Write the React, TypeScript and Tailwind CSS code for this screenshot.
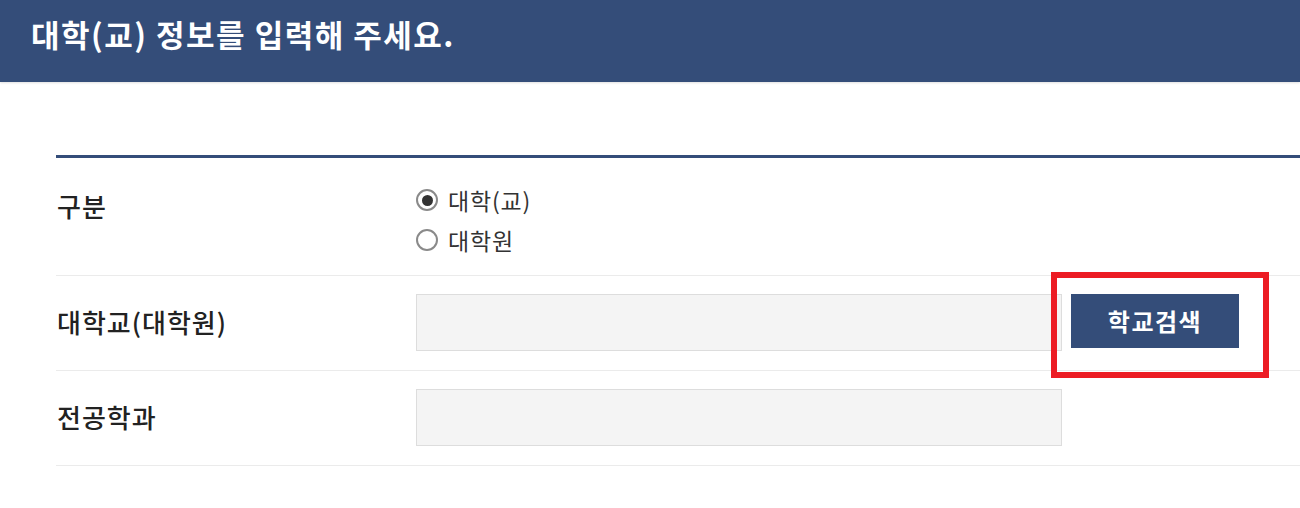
import { useState } from "react";

const font = { fontFamily: '"Noto Sans CJK KR", "Noto Sans", sans-serif' };

function Radio({ checked, label, onClick }: { checked: boolean; label: string; onClick: () => void }) {
  return (
    <label className="flex items-center gap-[10px] cursor-pointer h-[40px]" onClick={onClick}>
      <span className="w-[22px] h-[22px] rounded-full border-2 border-[#8a8a8a] bg-white flex items-center justify-center">
        {checked && <span className="w-[11px] h-[11px] rounded-full bg-[#333]"></span>}
      </span>
      <span className="text-[23px] text-[#333] leading-none tracking-[0.8px]">{label}</span>
    </label>
  );
}

export default function App() {
  const [type, setType] = useState("univ");

  return (
    <div className="min-h-screen bg-white overflow-hidden" style={font}>
      {/* Header */}
      <div className="bg-[#344d79] h-[82px] pl-[31px] pt-[15px] shadow-[0_1px_2px_rgba(0,0,0,0.12)]">
        <h1 className="text-white text-[31px] font-bold leading-[38px] tracking-[1.5px]">대학(교) 정보를 입력해 주세요.</h1>
      </div>

      <div className="pl-[56px] pt-[73px]">
        <div className="border-t-[3px] border-[#344d79]">
          {/* 구분 */}
          <div className="flex border-b border-[#ebebeb] h-[118px]">
            <div className="w-[360px] pl-[1px] pt-[28px] text-[26px] font-medium text-[#222] tracking-[1px]">구분</div>
            <div className="pt-[22px]">
              <Radio checked={type === "univ"} label="대학(교)" onClick={() => setType("univ")} />
              <Radio checked={type === "grad"} label="대학원" onClick={() => setType("grad")} />
            </div>
          </div>

          {/* 대학교 */}
          <div className="flex items-start border-b border-[#ebebeb] h-[95px] pt-[18px]">
            <div className="w-[360px] pl-[1px] pt-[8px] text-[26px] font-medium text-[#222] tracking-[1px]">대학교(대학원)</div>
            <input
              type="text"
              className="w-[646px] h-[57px] bg-[#f4f4f4] border border-[#dddddd] outline-none"
            />
            <div className="relative ml-[9px]">
              <button className="w-[168px] h-[54px] bg-[#344d79] text-white text-[24px] font-bold tracking-[1.5px]">
                학교검색
              </button>
              <div className="absolute -left-[20px] -top-[22px] w-[218px] h-[106px] border-[6px] border-[#ec1c24] pointer-events-none"></div>
            </div>
          </div>

          {/* 전공학과 */}
          <div className="flex items-start border-b border-[#ebebeb] h-[95px] pt-[18px]">
            <div className="w-[360px] pl-[1px] pt-[8px] text-[26px] font-medium text-[#222] tracking-[1px]">전공학과</div>
            <input
              type="text"
              className="w-[646px] h-[57px] bg-[#f4f4f4] border border-[#dddddd] outline-none"
            />
          </div>
        </div>
      </div>
    </div>
  );
}
